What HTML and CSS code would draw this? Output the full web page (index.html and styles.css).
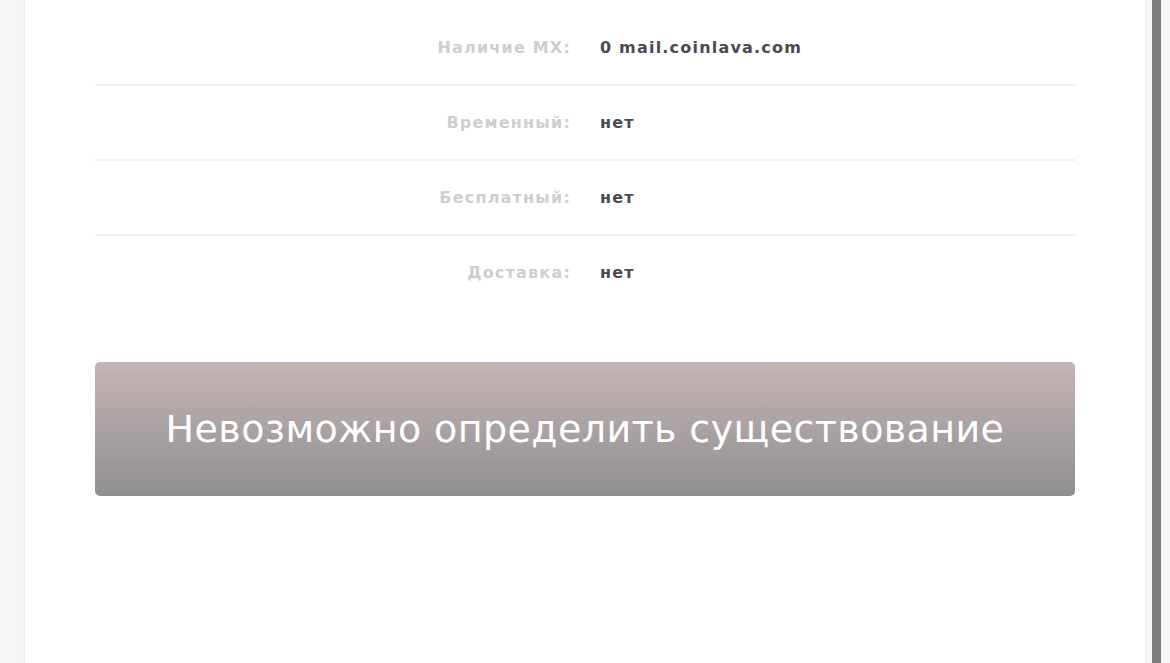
FILE: index.html
```html
<!DOCTYPE html>
<html lang="ru">
<head>
  <meta charset="UTF-8">
  <title>Проверка email</title>
  <link rel="stylesheet" href="styles.css">
</head>
<body>

  <div class="page">
    <div class="card">
      <div class="info">
        <div class="row">
          <div class="label">Наличие MX:</div>
          <div class="value">0 mail.coinlava.com</div>
        </div>
        <div class="row">
          <div class="label">Временный:</div>
          <div class="value">нет</div>
        </div>
        <div class="row">
          <div class="label">Бесплатный:</div>
          <div class="value">нет</div>
        </div>
        <div class="row">
          <div class="label">Доставка:</div>
          <div class="value">нет</div>
        </div>
      </div>

      <div class="result">Невозможно определить существование</div>
    </div>

    <div class="scroll"></div>
  </div>

</body>
</html>
```

FILE: styles.css
```css
html, body {
  height: 100%;
}

body {
  margin: 0;
  background: #f5f6f8;
  font-family: "DejaVu Sans", "Noto Sans", sans-serif;
  overflow: hidden;
}

.page {
  display: flex;
  height: 100%;
  padding-left: 25px;
}

.card {
  width: 1120px;
  box-sizing: border-box;
  background: #fff;
  box-shadow: 0 0 2px rgba(0, 0, 0, 0.08);
  padding: 11px 70px 0;
}

.row {
  display: flex;
  align-items: center;
  height: 73px;
  border-bottom: 2px solid #f0f1f4;
}

.row:last-child {
  border-bottom: none;
}

.label {
  width: 476px;
  text-align: right;
  font-size: 16px;
  letter-spacing: 1.2px;
  font-weight: bold;
  color: #cdced2;
}

.value {
  margin-left: 29px;
  font-size: 16px;
  letter-spacing: 1.2px;
  font-weight: bold;
  color: #4a4b50;
}

.result {
  margin-top: 53px;
  height: 134px;
  display: flex;
  align-items: center;
  justify-content: center;
  border-radius: 5px;
  background: linear-gradient(to bottom, #c5b4b4, #8f8f92);
  color: #fff;
  font-size: 38px;
  letter-spacing: 0.4px;
}

.scroll {
  width: 9px;
  margin-left: 7px;
  background: #7b7b7d;
}
```
